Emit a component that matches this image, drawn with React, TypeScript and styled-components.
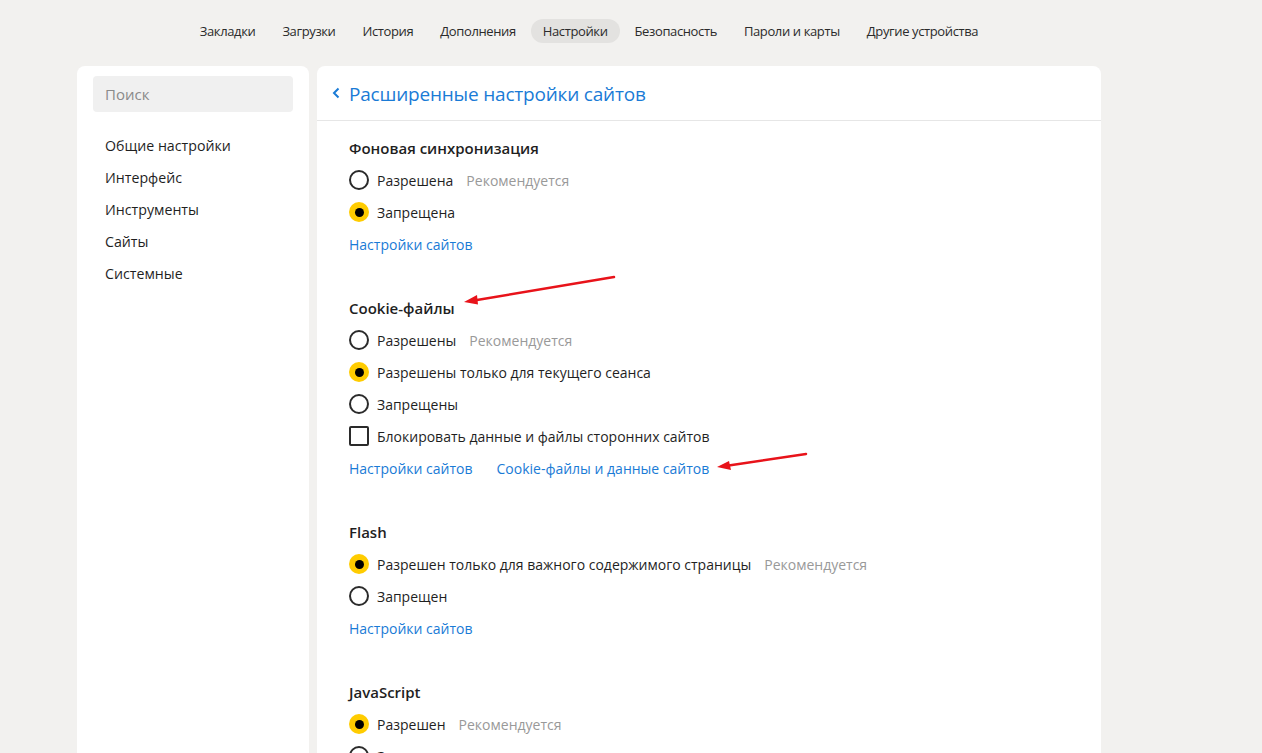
import React from "react";
import styled, { createGlobalStyle } from "styled-components";

const Global = createGlobalStyle`
  html, body { margin: 0; padding: 0; height: 100%; }
  body {
    background: #f2f1ef;
    font-family: "Open Sans", "Noto Sans", "Liberation Sans", sans-serif;
    color: #1f1f1f;
    overflow: hidden;
  }
  * { box-sizing: border-box; }
`;

const Page = styled.div`
  position: relative;
  height: 753px;
  padding-left: 77px;
  display: flex;
  flex-direction: column;
`;

const Column = styled.div`
  width: 1024px;
  display: flex;
  flex-direction: column;
  flex: 1;
  min-height: 0;
`;

const Nav = styled.nav`
  height: 66px;
  display: flex;
  align-items: center;
  justify-content: center;
  gap: 3px;
  padding-bottom: 4px;
`;

const NavItem = styled.span<{ $active?: boolean }>`
  font-size: 13px;
  height: 24px;
  line-height: 24px;
  padding: 0 12px;
  border-radius: 12px;
  color: #2b2b2b;
  letter-spacing: -0.38px;
  background: ${(p) => (p.$active ? "#e3e2e0" : "transparent")};
`;

const Body = styled.div`
  flex: 1;
  display: flex;
  gap: 8px;
  min-height: 0;
`;

const Sidebar = styled.aside`
  width: 232px;
  background: #fff;
  border-radius: 8px 8px 0 0;
  padding: 10px 16px;
`;

const Search = styled.div`
  height: 36px;
  background: #f0f0f0;
  border-radius: 4px;
  padding-left: 12px;
  display: flex;
  align-items: center;
  font-size: 15px;
  color: #8a8a8a;
`;

const Menu = styled.ul`
  list-style: none;
  margin: 18px 0 0;
  padding: 0 0 0 12px;
`;

const MenuItem = styled.li`
  font-size: 14.2px;
  line-height: 32px;
  color: #1f1f1f;
`;

const Main = styled.main`
  width: 784px;
  background: #fff;
  border-radius: 8px 8px 0 0;
  overflow: hidden;
`;

const Header = styled.header`
  height: 55px;
  border-bottom: 1px solid #e6e6e6;
  display: flex;
  align-items: center;
  padding-left: 15px;
  gap: 8px;
`;

const Title = styled.h1`
  margin: 0;
  font-size: 19px;
  font-weight: 400;
  color: #1a7bd6;
  letter-spacing: -0.2px;
  transform: translateY(1px);
`;

const Content = styled.div`
  padding: 11px 32px 0;
`;

const Section = styled.section`
  margin-bottom: 32px;
`;

const Heading = styled.h2`
  margin: 0;
  font-size: 15px;
  font-weight: 600;
  line-height: 32px;
  height: 32px;
  color: #1f1f1f;
`;

const Row = styled.div`
  height: 32px;
  display: flex;
  align-items: center;
  font-size: 14px;
  color: #1f1f1f;
`;

const Radio = styled.span<{ $on?: boolean }>`
  width: 20px;
  height: 20px;
  border-radius: 50%;
  margin-right: 8px;
  flex: none;
  display: flex;
  align-items: center;
  justify-content: center;
  border: ${(p) => (p.$on ? "none" : "2px solid #2b2b2b")};
  background: ${(p) => (p.$on ? "#ffcc00" : "#fff")};
  &::after {
    content: "";
    width: 9px;
    height: 9px;
    border-radius: 50%;
    background: #000;
    display: ${(p) => (p.$on ? "block" : "none")};
  }
`;

const Check = styled.span`
  width: 20px;
  height: 20px;
  border: 2px solid #2b2b2b;
  border-radius: 2px;
  margin-right: 8px;
  flex: none;
`;

const Hint = styled.span`
  color: #999;
  margin-left: 13px;
`;

const Links = styled.div`
  height: 32px;
  display: flex;
  align-items: center;
  gap: 24px;
`;

const Link = styled.a`
  font-size: 14px;
  color: #1a7bd6;
  text-decoration: none;
`;

const Overlay = styled.svg`
  position: absolute;
  left: 0;
  top: 0;
  pointer-events: none;
`;

type Opt = { label: string; on?: boolean; hint?: boolean; check?: boolean };

const sections: { title: string; opts: Opt[]; links?: string[] }[] = [
  {
    title: "Фоновая синхронизация",
    opts: [{ label: "Разрешена", hint: true }, { label: "Запрещена", on: true }],
    links: ["Настройки сайтов"],
  },
  {
    title: "Cookie-файлы",
    opts: [
      { label: "Разрешены", hint: true },
      { label: "Разрешены только для текущего сеанса", on: true },
      { label: "Запрещены" },
      { label: "Блокировать данные и файлы сторонних сайтов", check: true },
    ],
    links: ["Настройки сайтов", "Cookie-файлы и данные сайтов"],
  },
  {
    title: "Flash",
    opts: [
      { label: "Разрешен только для важного содержимого страницы", on: true, hint: true },
      { label: "Запрещен" },
    ],
    links: ["Настройки сайтов"],
  },
  {
    title: "JavaScript",
    opts: [{ label: "Разрешен", on: true, hint: true }, { label: "Запрещен" }],
    links: ["Настройки сайтов"],
  },
];

const navItems = [
  "Закладки",
  "Загрузки",
  "История",
  "Дополнения",
  "Настройки",
  "Безопасность",
  "Пароли и карты",
  "Другие устройства",
];

export default function App() {
  return (
    <>
      <Global />
      <Page>
        <Column>
          <Nav>
            {navItems.map((n) => (
              <NavItem key={n} $active={n === "Настройки"}>
                {n}
              </NavItem>
            ))}
          </Nav>
          <Body>
            <Sidebar>
              <Search>Поиск</Search>
              <Menu>
                {["Общие настройки", "Интерфейс", "Инструменты", "Сайты", "Системные"].map((m) => (
                  <MenuItem key={m}>{m}</MenuItem>
                ))}
              </Menu>
            </Sidebar>
            <Main>
              <Header>
                <svg width="9" height="12" viewBox="0 0 9 12">
                  <path d="M6.5 1.5 L2 6 L6.5 10.5" fill="none" stroke="#1a7bd6" strokeWidth="2" />
                </svg>
                <Title>Расширенные настройки сайтов</Title>
              </Header>
              <Content>
                {sections.map((s) => (
                  <Section key={s.title}>
                    <Heading>{s.title}</Heading>
                    {s.opts.map((o) => (
                      <Row key={o.label}>
                        {o.check ? <Check /> : <Radio $on={o.on} />}
                        {o.label}
                        {o.hint && <Hint>Рекомендуется</Hint>}
                      </Row>
                    ))}
                    {s.links && (
                      <Links>
                        {s.links.map((l) => (
                          <Link key={l} href="#">
                            {l}
                          </Link>
                        ))}
                      </Links>
                    )}
                  </Section>
                ))}
              </Content>
            </Main>
          </Body>
        </Column>
        <Overlay width="1262" height="753" viewBox="0 0 1262 753">
          <line x1="614" y1="277" x2="474" y2="300.5" stroke="#e8131a" strokeWidth="2.5" strokeLinecap="round" />
          <path d="M464 302 L477 295 L478 304.5 Z" fill="#e8131a" />
          <line x1="806" y1="454" x2="727" y2="465.7" stroke="#e8131a" strokeWidth="2.5" strokeLinecap="round" />
          <path d="M717 467 L729 461 L731 470 Z" fill="#e8131a" />
        </Overlay>
      </Page>
    </>
  );
}
